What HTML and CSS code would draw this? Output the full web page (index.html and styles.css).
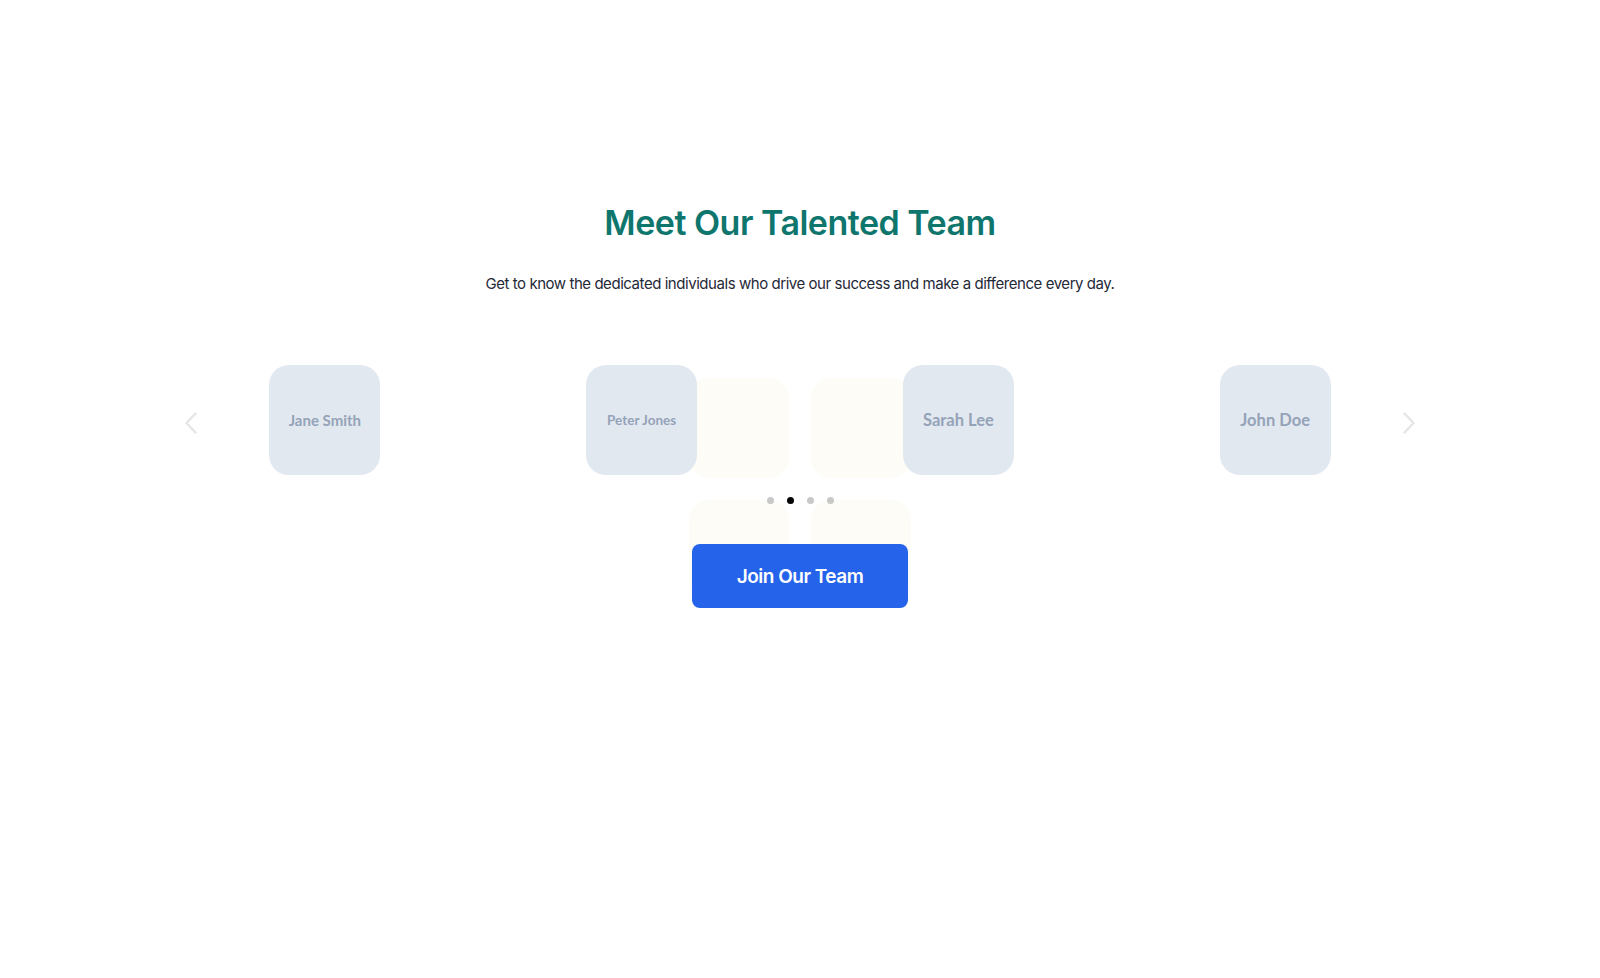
FILE: index.html
```html
<!DOCTYPE html>
<html lang="en">
<head>
    <meta charset="UTF-8">
    <meta name="viewport" content="width=device-width, initial-scale=1.0">
    <title>Meet Our Team</title>
    <link rel="stylesheet" href="styles.css">
</head>
<body>
    <section class="team">
        <h1 class="team-title">Meet Our Talented Team</h1>
        <p class="team-intro">Get to know the dedicated individuals who drive our success and make a difference every day.</p>

        <div class="carousel">
            <!-- soft background tiles behind the slider -->
            <div class="tiles">
                <span></span><span></span><span></span><span></span>
            </div>

            <button class="nav nav-prev" aria-label="Previous">
                <svg viewBox="0 0 12 22" width="12" height="22"><path d="M10.5 1.5 1.5 11l9 9.5" fill="none" stroke="currentColor" stroke-width="2.4" stroke-linecap="round" stroke-linejoin="round"/></svg>
            </button>

            <div class="track">
                <div class="slide"><div class="member-card name-md">Jane Smith</div></div>
                <div class="slide"><div class="member-card name-sm">Peter Jones</div></div>
                <div class="slide"><div class="member-card name-lg">Sarah Lee</div></div>
                <div class="slide"><div class="member-card name-lg">John Doe</div></div>
            </div>

            <button class="nav nav-next" aria-label="Next">
                <svg viewBox="0 0 12 22" width="12" height="22"><path d="M1.5 1.5 10.5 11l-9 9.5" fill="none" stroke="currentColor" stroke-width="2.4" stroke-linecap="round" stroke-linejoin="round"/></svg>
            </button>

            <div class="dots">
                <span class="dot"></span>
                <span class="dot active"></span>
                <span class="dot"></span>
                <span class="dot"></span>
            </div>
        </div>

        <a href="#" class="join-btn">Join Our Team</a>
    </section>
</body>
</html>
```

FILE: styles.css
```css
/* Team section */
body {
    margin: 0;
    background-color: #ffffff;
    font-family: Inter, 'Noto Sans', sans-serif;
    color: #1f2937;
}

.team {
    display: flex;
    flex-direction: column;
    align-items: center;
    padding-top: 203px;
}

.team-title {
    margin: 0;
    font-size: 34px;
    line-height: 40px;
    font-weight: 600;
    letter-spacing: -0.5px;
    color: #0f766e;
}

.team-intro {
    margin: 29px 0 0;
    font-size: 15px;
    line-height: 24px;
    letter-spacing: -0.45px;
    color: #1f2937;
}

.carousel {
    position: relative;
    width: 1267px;
    margin-top: 69px;
}

.tiles {
    position: absolute;
    left: 522px;
    top: 13px;
    display: grid;
    grid-template-columns: 100px 100px;
    grid-auto-rows: 100px;
    gap: 22px;
}

.tiles span {
    background-color: #fdfcf6;
    border-radius: 20px;
}

.track {
    position: relative;
    display: flex;
}

.slide {
    flex: 1;
    display: flex;
    justify-content: center;
}

.member-card {
    width: 111px;
    height: 110px;
    border-radius: 20px;
    background-color: #e2e8f0;
    color: #94a3b8;
    font-family: Lato, sans-serif;
    font-weight: 700;
    display: flex;
    align-items: center;
    justify-content: center;
}

.name-sm { font-size: 13.5px; }
.name-md { font-size: 15px; }
.name-lg { font-size: 16.5px; }

.nav {
    position: absolute;
    top: 47px;
    padding: 0;
    border: none;
    background: none;
    color: #e5e5e5;
    cursor: pointer;
    display: flex;
}

.nav-prev { left: 18px; }
.nav-next { right: 19px; }

.dots {
    position: relative;
    display: flex;
    justify-content: center;
    gap: 13px;
    margin-top: 22px;
}

.dot {
    width: 7px;
    height: 7px;
    border-radius: 50%;
    background-color: #c8c8c8;
}

.dot.active {
    background-color: #000000;
}

.join-btn {
    position: relative;
    margin-top: 40px;
    width: 216px;
    height: 64px;
    display: flex;
    align-items: center;
    justify-content: center;
    border-radius: 8px;
    background-color: #2563eb;
    color: #ffffff;
    font-size: 19px;
    font-weight: 600;
    letter-spacing: -0.5px;
    text-decoration: none;
}
```
